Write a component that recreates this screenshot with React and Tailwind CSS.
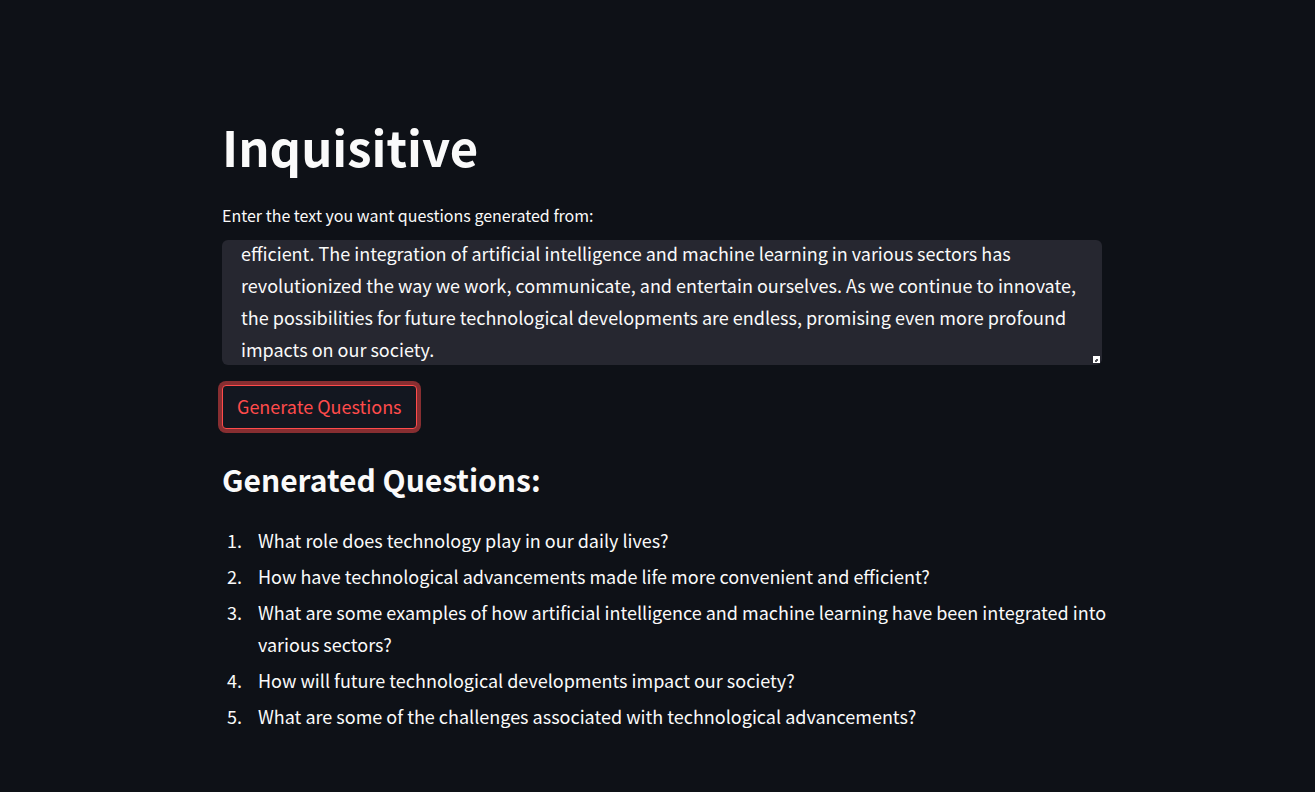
import React, { useEffect, useRef } from "react";

const passage =
  "Technology plays an important role in our daily lives.\nFrom phones to smart homes, technological advancements have made life more convenient and efficient. The integration of artificial intelligence and machine learning in various sectors has revolutionized the way we work, communicate, and entertain ourselves. As we continue to innovate, the possibilities for future technological developments are endless, promising even more profound impacts on our society.";

const questions = [
  "What role does technology play in our daily lives?",
  "How have technological advancements made life more convenient and efficient?",
  "What are some examples of how artificial intelligence and machine learning have been integrated into various sectors?",
  "How will future technological developments impact our society?",
  "What are some of the challenges associated with technological advancements?",
];

function ResizeGrip() {
  return (
    <svg
      aria-hidden="true"
      viewBox="0 0 7 7"
      className="pointer-events-none absolute right-[2px] bottom-[2px] size-[7px]"
    >
      <rect width="7" height="7" fill="#ffffff" />
      <path d="M3 3h2v2H4v1H2V4h1z" fill="#55565c" />
    </svg>
  );
}

export default function App() {
  const box = useRef(null);

  useEffect(() => {
    const show = () => {
      if (box.current) box.current.scrollTop = box.current.scrollHeight;
    };
    show();
    document.fonts.ready.then(show);
  }, []);

  return (
    <div className="min-h-screen bg-[#0e1117] pl-[9px] font-['Noto_Sans_CJK_SC','Open_Sans',sans-serif] text-[18px] leading-8 text-[#fafafa]">
      <main className="mx-auto max-w-[880px] pt-[113px] pb-12">
        <h1 className="text-[49px] leading-[66px] font-bold">Inquisitive</h1>
        <form onSubmit={(e) => e.preventDefault()}>
          <label htmlFor="source-text" className="mt-[22px] block text-[16px] leading-7">
            Enter the text you want questions generated from:
          </label>
          <div className="relative mt-[11px]">
            <textarea
              id="source-text"
              ref={box}
              defaultValue={passage}
              className="block h-[125px] w-full resize-none rounded-md bg-[#262730] px-[19px] outline-none [scrollbar-width:none]"
            />
            <ResizeGrip />
          </div>
          <button
            type="submit"
            className="mt-5 h-11 rounded border border-[#ff4b4b] bg-[#131720] px-3.5 pb-0.5 text-[#ff4b4b] ring-4 ring-[#ff4b4b]/50"
          >
            Generate Questions
          </button>
        </form>
        <h2 className="mt-7 text-[30px] leading-[44px] font-bold">Generated Questions:</h2>
        <ol className="-mr-2 mt-[23px] list-decimal space-y-1 pl-6">
          {questions.map((q) => (
            <li key={q} className="pl-3">
              {q}
            </li>
          ))}
        </ol>
      </main>
    </div>
  );
}
